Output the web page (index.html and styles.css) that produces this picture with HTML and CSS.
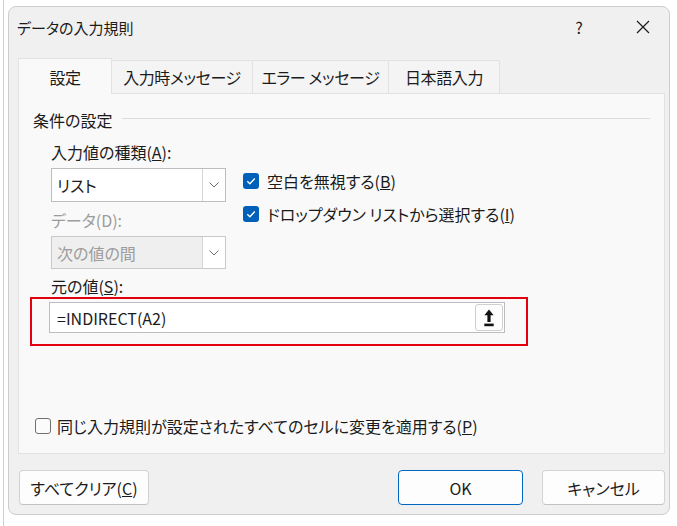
FILE: index.html
```html
<!DOCTYPE html>
<html lang="ja">
<head>
  <meta charset="UTF-8">
  <title>データの入力規則</title>
  <link rel="stylesheet" href="styles.css">
</head>
<body>
  <div class="dialog">
    <!-- title bar -->
    <div class="titlebar">
      <span class="title">データの入力規則</span>
      <span class="help">?</span>
      <span class="close">
        <svg width="14" height="14" viewBox="0 0 14 14"><path d="M1 1L13 13M13 1L1 13" stroke="#1b1b1b" stroke-width="1.2" fill="none"/></svg>
      </span>
    </div>

    <!-- tabs -->
    <div class="tabs">
      <div class="tab active tab-settings">設定</div>
      <div class="tab tab-input">入力時メッセージ</div>
      <div class="tab tab-error">エラー メッセージ</div>
      <div class="tab tab-ime">日本語入力</div>
    </div>

    <div class="panel">
      <div class="group-title">条件の設定</div>

      <div class="criteria">
        <div class="left-col">
          <div class="field-label">入力値の種類(<u>A</u>):</div>
          <div class="select">
            <span class="select-value">リスト</span>
            <span class="select-arrow">
              <svg width="10" height="6" viewBox="0 0 10 6"><path d="M0.5 0.5L5 5L9.5 0.5" stroke="#6b6b6b" stroke-width="1" fill="none"/></svg>
            </span>
          </div>
          <div class="field-label disabled">データ(D):</div>
          <div class="select disabled">
            <span class="select-value">次の値の間</span>
            <span class="select-arrow">
              <svg width="10" height="6" viewBox="0 0 10 6"><path d="M0.5 0.5L5 5L9.5 0.5" stroke="#6b6b6b" stroke-width="1" fill="none"/></svg>
            </span>
          </div>
        </div>

        <div class="options">
          <div class="check-row">
            <span class="checkbox checked">
              <svg width="16" height="16" viewBox="0 0 16 16"><path d="M4.3 8.3L6.9 10.8L11.8 5.6" stroke="#fff" stroke-width="1.4" fill="none"/></svg>
            </span>
            空白を無視する(<u>B</u>)
          </div>
          <div class="check-row">
            <span class="checkbox checked">
              <svg width="16" height="16" viewBox="0 0 16 16"><path d="M4.3 8.3L6.9 10.8L11.8 5.6" stroke="#fff" stroke-width="1.4" fill="none"/></svg>
            </span>
            ドロップダウン リストから選択する(<u>I</u>)
          </div>
        </div>
      </div>

      <div class="field-label source-label">元の値(<u>S</u>):</div>
      <div class="highlight">
        <div class="source-input">
          <span class="source-value">=INDIRECT(A2)</span>
          <span class="collapse-btn">
            <svg width="10" height="18" viewBox="0 0 10 18"><path d="M5 0.5L9.6 6.2H6.6V13H3.4V6.2H0.4Z" fill="#111"/><rect x="0.3" y="14.6" width="9.4" height="2.6" fill="#111"/></svg>
          </span>
        </div>
      </div>

      <div class="check-row apply">
        <span class="checkbox"></span>
        同じ入力規則が設定されたすべてのセルに変更を適用する(<u>P</u>)
      </div>
    </div>

    <div class="footer">
      <button class="btn btn-clear">すべてクリア(<u>C</u>)</button>
      <button class="btn btn-ok">OK</button>
      <button class="btn btn-cancel">キャンセル</button>
    </div>
  </div>
</body>
</html>
```

FILE: styles.css
```css
body {
  margin: 0;
  height: 526px;
  overflow: hidden;
  background: linear-gradient(90deg, #fff 0, #fff 3px, #cfcfcf 3px, #cfcfcf 4px, #fff 4px);
  font-family: "Noto Sans CJK JP", "Noto Sans", sans-serif;
  font-feature-settings: "palt";
  font-size: 16px;
  color: #1b1b1b;
}

.dialog {
  box-sizing: border-box;
  width: 662px;
  height: 509px;
  margin: 6px 0 0 8px;
  padding: 0 4px 9px 9px;
  background: #f0f0f0;
  border: 1px solid #cdcdcd;
  border-radius: 8px;
  display: flex;
  flex-direction: column;
}

/* title bar */
.titlebar {
  height: 40px;
  display: flex;
  align-items: center;
}

.title {
  font-size: 15px;
  margin-left: -1px;
  flex: 1;
}

.help {
  width: 20px;
  text-align: center;
  font-size: 16px;
  margin-right: 32px;
}

.close {
  width: 44px;
  display: flex;
  justify-content: center;
}

/* tabs */
.tabs {
  display: flex;
  margin-top: 13px;
  height: 33px;
}

.tab {
  box-sizing: border-box;
  display: flex;
  align-items: center;
  justify-content: center;
  background: #f4f4f4;
  border: 1px solid #e2e2e2;
  border-bottom: none;
  margin-right: -1px;
  line-height: 22px;
  letter-spacing: -0.4px;
  white-space: nowrap;
}

.tab.active {
  background: #f9f9f9;
  margin-top: -2px;
  height: 36px;
  position: relative;
  z-index: 1;
}

.tab-settings { width: 94px; }
.tab-input { width: 142px; }
.tab-error { width: 137px; }
.tab-ime { width: 112px; }

/* panel */
.panel {
  flex: 1;
  background: #f9f9f9;
  border: 1px solid #e2e2e2;
  display: flex;
  flex-direction: column;
}

.group-title {
  display: flex;
  align-items: flex-start;
  margin: 15px 14px 0 14px;
  line-height: 22px;
}

.group-title::after {
  content: "";
  flex: 1;
  height: 1px;
  background: #dcdcdc;
  margin: 9px 0 0 10px;
}

.criteria {
  display: flex;
  gap: 17px;
  margin: 10px 0 0 32px;
}

.left-col {
  width: 175px;
}

.field-label {
  line-height: 22px;
  margin-bottom: 5px;
}

.field-label.disabled {
  color: #9c9c9c;
}

.select {
  box-sizing: border-box;
  height: 34px;
  margin-bottom: 7px;
  background: #fff;
  border: 1px solid #bdbdbd;
  display: flex;
}

.select-value {
  flex: 1;
  display: flex;
  align-items: center;
  padding-left: 5px;
}

.select-arrow {
  width: 22px;
  border-left: 1px solid #d6d6d6;
  display: flex;
  align-items: center;
  justify-content: center;
  background: #fff;
}

.select.disabled {
  height: 33px;
  margin-bottom: 6px;
  background: #efefef;
  border-color: #c9c9c9;
  color: #9c9c9c;
}

.options {
  margin-top: 27px;
  display: flex;
  flex-direction: column;
  gap: 7px;
}

.check-row {
  display: flex;
  align-items: center;
  height: 26px;
}

.checkbox {
  box-sizing: border-box;
  width: 16px;
  height: 16px;
  border-radius: 3px;
  border: 1px solid #707070;
  background: #fbfbfb;
  margin-right: 8px;
  display: flex;
}

.checkbox.checked {
  border: none;
  background: #005fb8;
}

.source-label {
  margin-left: 32px;
}

.highlight {
  box-sizing: border-box;
  width: 498px;
  margin: -5px 0 0 11px;
  padding: 3px 21px 11px 17px;
  border: 2px solid #e3000f;
}

.source-input {
  box-sizing: border-box;
  height: 31px;
  background: #fff;
  border: 1px solid #bdbdbd;
  display: flex;
  align-items: center;
  padding: 0 1px 0 7px;
}

.source-value {
  flex: 1;
}

.collapse-btn {
  box-sizing: border-box;
  width: 28px;
  height: 27px;
  border: 1px solid #cfcfcf;
  border-radius: 3px;
  background: #fdfdfd;
  display: flex;
  align-items: center;
  justify-content: center;
}

.check-row.apply {
  margin: auto 0 14px 16px;
}

.check-row.apply .checkbox {
  margin-right: 6px;
}

/* buttons */
.footer {
  display: flex;
  margin-top: 16px;
  height: 35px;
}

.btn {
  box-sizing: border-box;
  height: 35px;
  font-family: inherit;
  font-feature-settings: "palt";
  font-size: 16px;
  color: #1b1b1b;
  background: #fdfdfd;
  border: 1px solid #d3d3d3;
  border-bottom-color: #c2c2c2;
  border-radius: 4px;
  padding: 0;
}

.btn-clear {
  width: 130px;
  margin-left: 1px;
}

.btn-ok {
  width: 125px;
  margin-left: auto;
  border: 1px solid #0067c0;
}

.btn-cancel {
  width: 123px;
  margin-left: 19px;
}
```
